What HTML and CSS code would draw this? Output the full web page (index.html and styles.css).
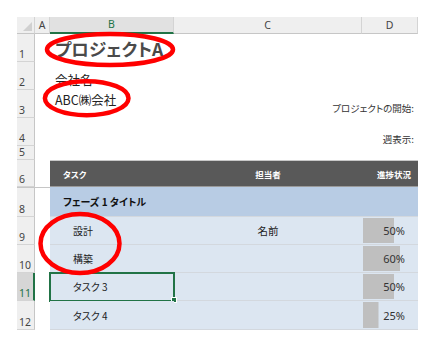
FILE: index.html
```html
<!DOCTYPE html>
<html lang="ja">
<head>
    <meta charset="UTF-8">
    <title>プロジェクトA</title>
    <link rel="stylesheet" href="styles.css">
</head>
<body>
    <div class="page">
        <div class="sheet">
            <div class="corner"></div>
            <div class="colh">A</div>
            <div class="colh sel">B</div>
            <div class="colh">C</div>
            <div class="colh">D</div>

            <div class="rowh">1</div>
            <div class="cell"></div>
            <div class="cell title span3">プロジェクトA</div>

            <div class="rowh">2</div>
            <div class="cell"></div>
            <div class="cell company low span3">会社名</div>

            <div class="rowh">3</div>
            <div class="cell"></div>
            <div class="cell company high">ABC㈱会社</div>
            <div class="cell label span2">プロジェクトの開始:</div>

            <div class="rowh">4</div>
            <div class="cell"></div>
            <div class="cell label low span3">週表示:</div>

            <div class="rowh">5</div>
            <div class="cell span4"></div>

            <div class="rowh">6</div>
            <div class="cell"></div>
            <div class="th">タスク</div>
            <div class="th center">担当者</div>
            <div class="th right">進捗状況</div>

            <div class="rowh hidden-above">8</div>
            <div class="cell hidden-above"></div>
            <div class="phase span3">フェーズ 1 タイトル</div>

            <div class="rowh">9</div>
            <div class="cell"></div>
            <div class="td task">設計</div>
            <div class="td owner">名前</div>
            <div class="td pct" style="--p: 0.5">50%</div>

            <div class="rowh">10</div>
            <div class="cell"></div>
            <div class="td task">構築</div>
            <div class="td owner"></div>
            <div class="td pct" style="--p: 0.6">60%</div>

            <div class="rowh sel">11</div>
            <div class="cell"></div>
            <div class="td task active">タスク 3</div>
            <div class="td owner"></div>
            <div class="td pct" style="--p: 0.5">50%</div>

            <div class="rowh">12</div>
            <div class="cell"></div>
            <div class="td task">タスク 4</div>
            <div class="td owner"></div>
            <div class="td pct" style="--p: 0.25">25%</div>
        </div>

        <!-- 赤丸の注釈 -->
        <svg class="marks" width="430" height="356" viewBox="0 0 430 356">
            <ellipse cx="110" cy="49.5" rx="63" ry="15.5" />
            <ellipse cx="86.7" cy="98.2" rx="41.8" ry="17" />
            <ellipse cx="80" cy="243.5" rx="39.5" ry="29.5" />
        </svg>
    </div>
</body>
</html>
```

FILE: styles.css
```css
:root {
    --head-bg: #efefef;
    --head-line: #d4d4d4;
    --head-text: #444;
    --sel-green: #217346;
    --dark: #595959;
    --phase: #b8cce4;
    --row: #dce6f1;
    --row-line: #d3d8de;
    --bar: #bfbfbf;
    --jp: "Noto Sans CJK JP", "Noto Sans", sans-serif;
}
body {
    margin: 0;
    background: #fff;
    font-family: var(--jp);
    font-feature-settings: "palt";
    color: #222;
}
.page { position: relative; width: 430px; height: 356px; overflow: hidden; }
.sheet {
    display: grid;
    grid-template-columns: 18px 15px 124px 188px 56px;
    grid-template-rows: 17px 28px 28px 28px 28px 14px 27px 30px 28px 28px 28px 29px;
    margin: 17px 0 0 17px;
    width: 401px;
}
.sheet > div { box-sizing: border-box; min-width: 0; white-space: nowrap; }
.span2 { grid-column: span 2; }
.span3 { grid-column: span 3; }
.span4 { grid-column: span 4; }

/* 見出し */
.corner { background: var(--head-bg); border-right: 1px solid var(--head-line); border-bottom: 1px solid #c6c6c6; position: relative; }
.corner::after { content: ""; position: absolute; right: 2px; bottom: 2px; border-style: solid; border-width: 0 0 9px 9px; border-color: transparent transparent #d0d0d0 transparent; }
.colh { background: var(--head-bg); border-right: 1px solid var(--head-line); border-bottom: 1px solid #c6c6c6; font-family: "Noto Sans", sans-serif; font-size: 10.5px; color: var(--head-text); display: flex; align-items: center; justify-content: center; line-height: 1; }
.colh.sel { background: #e1e1e1; color: var(--sel-green); border-bottom: 2px solid var(--sel-green); }
.rowh { background: var(--head-bg); border-right: 1px solid #c6c6c6; border-bottom: 1px solid var(--head-line); font-family: "Noto Sans", sans-serif; font-size: 10.5px; color: var(--head-text); display: flex; align-items: flex-end; padding: 0 0 2px 2px; line-height: 1; }
.rowh.sel { background: #d6d6d6; color: var(--sel-green); border-right: 2px solid var(--sel-green); }
.hidden-above { border-top: 1px solid #c6c6c6; }

/* 上部 */
.cell { display: flex; align-items: center; }
.title { font-size: 17.5px; font-weight: bold; color: #4a4a4a; padding-left: 5px; }
.company { font-size: 12.5px; color: #222; padding-left: 5px; }
.company.low { align-items: flex-end; padding-bottom: 1px; }
.company.high { align-items: flex-start; }
.label { font-size: 9.5px; color: #333; justify-content: flex-end; padding-right: 4px; align-items: flex-end; padding-bottom: 3px; }
.label.low { padding-bottom: 0; }

/* 表 */
.th { background: var(--dark); color: #fff; font-size: 8.5px; font-weight: bold; display: flex; align-items: center; padding-left: 13px; border-top: 1px solid #c8c8c8; border-bottom: 1px solid #9a9a9a; }
.th.center { justify-content: center; padding-left: 0; }
.th.right { justify-content: flex-end; padding: 0 7px 0 0; }
.phase { background: var(--phase); font-size: 10px; font-weight: bold; color: #111; display: flex; align-items: center; padding-left: 13px; border-bottom: 1px solid var(--row-line); }
.td { background: var(--row); font-size: 10px; color: #222; display: flex; align-items: center; border-bottom: 1.5px solid var(--row-line); }
.task { padding-left: 23px; position: relative; }
.owner { justify-content: center; font-size: 10.5px; }
.pct {
    justify-content: flex-end;
    padding-right: 13px;
    font-family: "Noto Sans", sans-serif;
    font-size: 11px;
    color: #333;
    background: linear-gradient(var(--bar), var(--bar)) no-repeat 1px 1px / calc(var(--p) * 62px) calc(100% - 2px), var(--row);
}
.task.active { outline: 2px solid var(--sel-green); outline-offset: -1px; }
.task.active::after { content: ""; position: absolute; right: -3px; bottom: -3px; width: 4px; height: 4px; background: var(--sel-green); border: 1px solid #fff; }

.marks { position: absolute; left: 0; top: 0; pointer-events: none; }
.marks ellipse { fill: none; stroke: #f00; stroke-width: 4.5; }
```
